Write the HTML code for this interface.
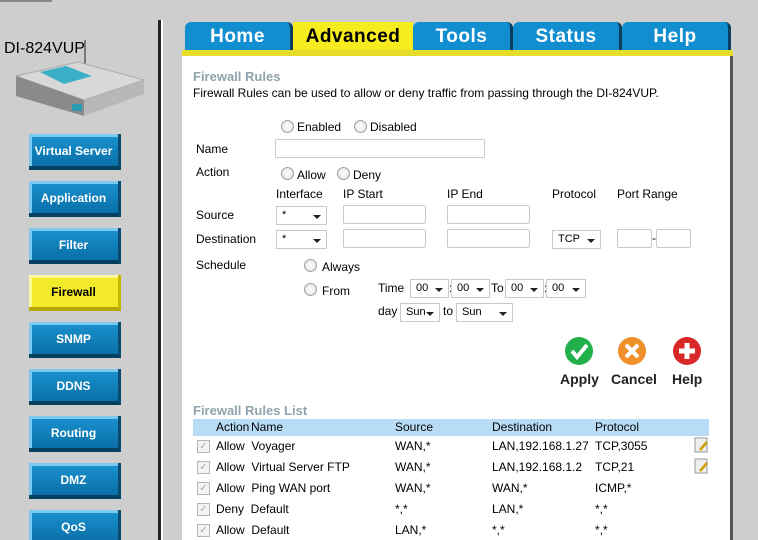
<!DOCTYPE html>
<html><head><style>
*{margin:0;padding:0;box-sizing:border-box}
html,body{width:758px;height:540px;overflow:hidden}
body{background:#cecece;font-family:"Liberation Sans",Arial,sans-serif;font-size:12px;color:#000;position:relative}
.a{position:absolute;white-space:nowrap}
.btn{position:absolute;left:29px;width:92px;height:36px;background:linear-gradient(#1a93d0,#0a6fa8);border-right:3px solid #0a4a6e;border-bottom:4px solid #06405f;color:#fff;font-weight:bold;font-size:12px;text-align:center;line-height:34px;box-shadow:inset 3px 3px 0 #7cc8ee}
.btn.y{background:#f3ea2a;color:#000;border-right-color:#c7b500;border-bottom-color:#b6a600;box-shadow:inset 3px 3px 0 #fffa9a}
.tab{position:absolute;top:22px;height:28px;background:#118ed0;color:#fff;font-weight:bold;font-size:19px;letter-spacing:0.5px;text-align:center;line-height:29px;border-right:3px solid #0a3e5e;border-radius:6px 6px 0 0}
.tab.y{background:#f6ec1f;color:#000;border-right:none;border-radius:0}
.in{position:absolute;height:19px;border:1px solid #c9c9c9;background:#fff;border-radius:2px}
.sel{position:absolute;height:19px;border:1px solid #c9c9c9;background:#fff;font-size:11px;line-height:17px;padding-left:5px}
.sel:after{content:"";position:absolute;right:5px;top:8px;border-left:4px solid transparent;border-right:4px solid transparent;border-top:4px solid #222}
.r{position:absolute;width:13px;height:13px;border-radius:50%;border:1px solid #a0a0a0;background:radial-gradient(#fff,#ddd)}
.cb{position:absolute;left:197px;width:13px;height:13px;border:1px solid #b5b5b5;background:#f3f3f3;color:#aaa;font-size:10px;line-height:11px;text-align:center}
.hd{color:#8fa3ad;font-weight:bold;font-size:13px}
.lbl{font-weight:bold;font-size:14px;color:#222}
</style></head><body>
<div class="a" style="left:0;top:0;width:52px;height:2px;background:#888"></div>
<div class="a" style="left:4px;top:40px;font-size:16px">DI-824VUP</div>
<svg class="a" style="left:14px;top:38px" width="135" height="80">
<line x1="71" y1="2" x2="71" y2="42" stroke="#777" stroke-width="2"/>
<polygon points="2,38 64,24 130,42 70,62" fill="#d8d8d8" stroke="#aaa"/>
<polygon points="2,38 70,62 70,78 2,58" fill="#8a8a8a"/>
<polygon points="70,62 130,42 130,56 70,78" fill="#b8b8b8"/>
<polygon points="26,34 52,28 78,38 50,46" fill="#3ab0c8"/>
<rect x="58" y="66" width="10" height="7" fill="#2a9ab0"/>
</svg>
<div class="a" style="left:158px;top:20px;width:3px;height:520px;background:#222"></div>
<div class="a" style="left:161px;top:20px;width:2px;height:520px;background:#fff"></div>

<div class="btn" style="top:134px">Virtual Server</div>
<div class="btn" style="top:181px">Application</div>
<div class="btn" style="top:228px">Filter</div>
<div class="btn y" style="top:275px">Firewall</div>
<div class="btn" style="top:322px">SNMP</div>
<div class="btn" style="top:369px">DDNS</div>
<div class="btn" style="top:416px">Routing</div>
<div class="btn" style="top:463px">DMZ</div>
<div class="btn" style="top:510px">QoS</div>

<div class="a" style="left:182px;top:56px;width:548px;height:484px;background:#fff"></div>
<div class="a" style="left:730px;top:56px;width:3px;height:484px;background:#555"></div>
<div class="a" style="left:182px;top:50px;width:551px;height:6px;background:#e6dc2a"></div>
<div class="tab" style="left:185px;width:108px">Home</div>
<div class="tab y" style="left:293px;width:120px">Advanced</div>
<div class="tab" style="left:413px;width:100px">Tools</div>
<div class="tab" style="left:513px;width:109px">Status</div>
<div class="tab" style="left:622px;width:109px">Help</div>

<div class="a hd" style="left:193px;top:69px">Firewall Rules</div>
<div class="a" style="left:193px;top:86px">Firewall Rules can be used to allow or deny traffic from passing through the DI-824VUP.</div>

<div class="r" style="left:281px;top:120px"></div><div class="a" style="left:297px;top:120px">Enabled</div>
<div class="r" style="left:354px;top:120px"></div><div class="a" style="left:370px;top:120px">Disabled</div>
<div class="a" style="left:196px;top:142px">Name</div>
<div class="in" style="left:275px;top:139px;width:210px"></div>
<div class="a" style="left:196px;top:165px">Action</div>
<div class="r" style="left:281px;top:167px"></div><div class="a" style="left:297px;top:168px">Allow</div>
<div class="r" style="left:337px;top:167px"></div><div class="a" style="left:353px;top:168px">Deny</div>
<div class="a" style="left:276px;top:187px">Interface</div>
<div class="a" style="left:343px;top:187px">IP Start</div>
<div class="a" style="left:447px;top:187px">IP End</div>
<div class="a" style="left:552px;top:187px">Protocol</div>
<div class="a" style="left:617px;top:187px">Port Range</div>
<div class="a" style="left:196px;top:208px">Source</div>
<div class="sel" style="left:276px;top:206px;width:51px">*</div>
<div class="in" style="left:343px;top:205px;width:83px"></div>
<div class="in" style="left:447px;top:205px;width:83px"></div>
<div class="a" style="left:196px;top:232px">Destination</div>
<div class="sel" style="left:276px;top:230px;width:51px">*</div>
<div class="in" style="left:343px;top:229px;width:83px"></div>
<div class="in" style="left:447px;top:229px;width:83px"></div>
<div class="sel" style="left:552px;top:230px;width:49px">TCP</div>
<div class="in" style="left:617px;top:229px;width:35px"></div>
<div class="a" style="left:652px;top:231px">-</div>
<div class="in" style="left:656px;top:229px;width:35px"></div>
<div class="a" style="left:196px;top:258px">Schedule</div>
<div class="r" style="left:304px;top:259px"></div><div class="a" style="left:322px;top:260px">Always</div>
<div class="r" style="left:304px;top:283px"></div><div class="a" style="left:322px;top:284px">From</div>
<div class="a" style="left:378px;top:281px">Time</div>
<div class="sel" style="left:410px;top:279px;width:39px">00</div>
<div class="a" style="left:449px;top:281px">:</div>
<div class="sel" style="left:451px;top:279px;width:39px">00</div>
<div class="a" style="left:491px;top:281px">To</div>
<div class="sel" style="left:505px;top:279px;width:39px">00</div>
<div class="a" style="left:544px;top:281px">:</div>
<div class="sel" style="left:546px;top:279px;width:40px">00</div>
<div class="a" style="left:378px;top:304px">day</div>
<div class="sel" style="left:400px;top:303px;width:40px">Sun</div>
<div class="a" style="left:443px;top:304px">to</div>
<div class="sel" style="left:456px;top:303px;width:57px">Sun</div>

<svg class="a" style="left:563px;top:336px" width="150" height="32">
<circle cx="16" cy="15" r="14" fill="#22b04a"/><path d="M9 15l5 6 10-12" stroke="#fff" stroke-width="4" fill="none"/>
<circle cx="69" cy="15" r="14" fill="#f0902a"/><path d="M63 9l12 12M75 9l-12 12" stroke="#fff" stroke-width="4"/>
<circle cx="124" cy="15" r="14" fill="#d82828"/><path d="M124 7v16M116 15h16" stroke="#fff" stroke-width="5"/>
</svg>
<div class="a lbl" style="left:560px;top:371px">Apply</div>
<div class="a lbl" style="left:611px;top:371px">Cancel</div>
<div class="a lbl" style="left:672px;top:371px">Help</div>

<div class="a hd" style="left:193px;top:403px">Firewall Rules List</div>
<div class="a" style="left:193px;top:419px;width:516px;height:17px;background:#b8dbf6"></div>
<div class="a" style="left:216px;top:420px">Action</div><div class="a" style="left:251px;top:420px">Name</div>
<div class="a" style="left:395px;top:420px">Source</div><div class="a" style="left:492px;top:420px">Destination</div><div class="a" style="left:595px;top:420px">Protocol</div>

<div class="cb" style="top:440px">✓</div><div class="a" style="left:216px;top:439px">Allow&nbsp; Voyager</div><div class="a" style="left:395px;top:439px">WAN,*</div><div class="a" style="left:492px;top:439px">LAN,192.168.1.27</div><div class="a" style="left:595px;top:439px">TCP,3055</div>
<div class="cb" style="top:461px">✓</div><div class="a" style="left:216px;top:460px">Allow&nbsp; Virtual Server FTP</div><div class="a" style="left:395px;top:460px">WAN,*</div><div class="a" style="left:492px;top:460px">LAN,192.168.1.2</div><div class="a" style="left:595px;top:460px">TCP,21</div>
<div class="cb" style="top:482px">✓</div><div class="a" style="left:216px;top:481px">Allow&nbsp; Ping WAN port</div><div class="a" style="left:395px;top:481px">WAN,*</div><div class="a" style="left:492px;top:481px">WAN,*</div><div class="a" style="left:595px;top:481px">ICMP,*</div>
<div class="cb" style="top:503px">✓</div><div class="a" style="left:216px;top:502px">Deny&nbsp; Default</div><div class="a" style="left:395px;top:502px">*,*</div><div class="a" style="left:492px;top:502px">LAN,*</div><div class="a" style="left:595px;top:502px">*,*</div>
<div class="cb" style="top:524px">✓</div><div class="a" style="left:216px;top:523px">Allow&nbsp; Default</div><div class="a" style="left:395px;top:523px">LAN,*</div><div class="a" style="left:492px;top:523px">*,*</div><div class="a" style="left:595px;top:523px">*,*</div>

<svg class="a" style="left:694px;top:437px" width="16" height="40">
<rect x="1" y="1" width="12" height="14" fill="#eee" stroke="#999"/><path d="M6 13l7-8" stroke="#c9a000" stroke-width="2.5"/>
<rect x="1" y="22" width="12" height="14" fill="#eee" stroke="#999"/><path d="M6 34l7-8" stroke="#c9a000" stroke-width="2.5"/>
</svg>
</body></html>
